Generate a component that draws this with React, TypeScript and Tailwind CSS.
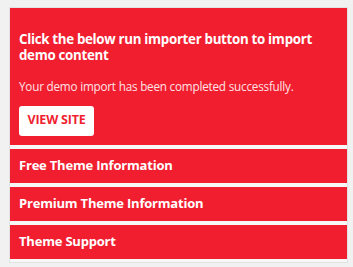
import React from 'react';

const sections = ['Free Theme Information', 'Premium Theme Information', 'Theme Support'];

export default function App() {
  return (
    <div className="min-h-[267px] w-[353px] bg-[#f1f1f1] pt-[7px] pl-[9px] pr-[5px] font-['Open_Sans',sans-serif]">
      <div className="flex flex-col gap-[4px] border border-[#e2e2e2] bg-[#f7f7f7] pb-[3px]">
        <div className="bg-[#f11e30] px-[9px] pt-[23px] pb-[9.5px] text-white">
          <h2 className="text-[13.3px] leading-[16px] font-bold tracking-[-0.3px]">
            Click the below run importer button to import demo content
          </h2>
          <p className="mt-[15px] text-[11.7px] leading-[16px] text-[#fde3e6] tracking-[-0.2px]">
            Your demo import has been completed successfully.
          </p>
          <button className="mt-[11.5px] h-[30px] w-[75px] rounded-[3px] bg-white text-[12.5px] font-bold text-[#f11e30] tracking-[-0.2px]">
            VIEW SITE
          </button>
        </div>
        {sections.map(s => (
          <div
            key={s}
            className="flex h-[34px] items-center bg-[#f11e30] px-[9px] text-[13px] font-bold text-white tracking-[-0.2px]"
          >
            {s}
          </div>
        ))}
      </div>
    </div>
  );
}
